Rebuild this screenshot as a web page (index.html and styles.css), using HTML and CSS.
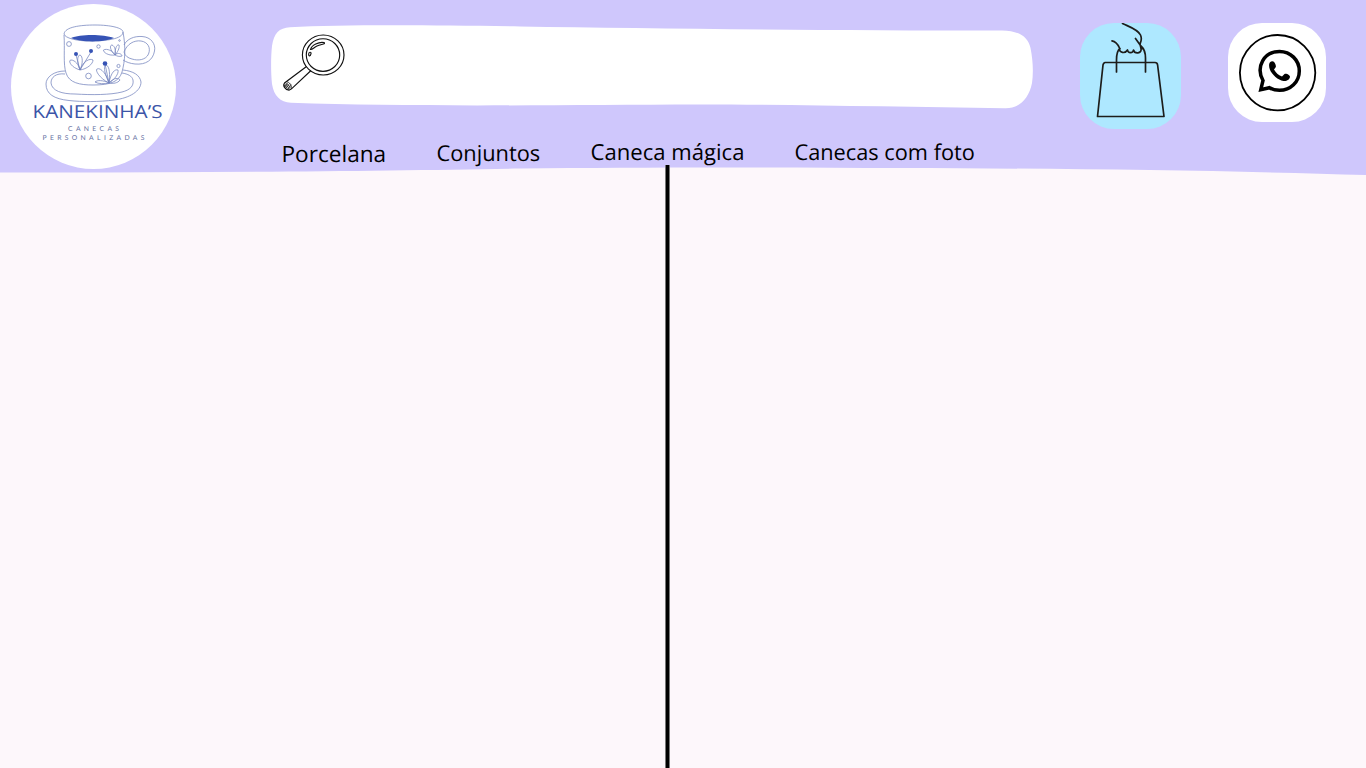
FILE: index.html
```html
<!DOCTYPE html>
<html lang="pt-BR">
<head>
<meta charset="utf-8">
<title>Kanekinha's</title>
<link rel="stylesheet" href="styles.css">
</head>
<body>
<header class="header">
  <svg class="header-shape" viewBox="0 0 1366 176" aria-hidden="true"><path d="M0 0H1366V175C1240 171 1080 168.500 900 168C780 167.200 640 167 520 168.500C380 171 180 173 0 172.500Z"/></svg>
  <a class="logo" href="#" aria-label="Kanekinha's">
    <svg viewBox="11 4 165 165">
      <circle class="logo-disc" cx="93.500" cy="86.500" r="82.500"/>
      <g class="logo-line">
        <path d="M64 34C65 27 80 25 95 25C111 25 123 28 123 32C123 39 106 41 90 41C76 41 65 38 64 34ZM64 35C65 49 63 64 66 73C69 83 80 85 93 85C110 85 119 82 122 72C125 61 126 48 123 32"/>
        <path d="M124 45C127 39 134 36 142 36.500C151 37 156 44 154.500 51C153 60 146 65 135 64C130 63.500 126 62 123 60"/>
        <path d="M124 52C127 44 134 40 141 41C148 42 151 48 148.500 54C146 60 138 61 132 59C128 58 125 56 124 52Z"/>
        <path d="M65 71C54 71 46 77 46 84C46 94 54 99 69 100.500C82 102 99 102 114 100C130 98 141 91 141 82C140 75 133 71 123 70"/>
        <path d="M65 74C56 73 51 77 51 83C52 91 62 94 75 94C92 95 110 95 122 92C130 90 134 86 133 80C132 76 128 74 122 73"/>
        <path d="M80 70C70 67 68 60 71 60C75 60 79 65 80 70C76 60 78 55 80 55C83 56 83 64 80 70C83 61 90 58 93 60C93 64 87 69 80 70M80 70L76 55M80 70L91 52"/>
        <path d="M109 83C99 78 95 70 97 69C101 67 107 75 109 83C103 70 104 65 106 65C110 66 110 76 109 83C111 72 115 69 118 70C119 74 114 80 109 83C114 77 119 78 120 80C118 83 113 84 109 83C103 80 97 80 95 82C98 84 105 84 109 83M109 83L105 64"/>
        <path d="M115 55C108 56 103 52 103.500 50C107 48 113 51 115 55C109 49 110 45 112 45C115 46 116 51 115 55C115 48 117 44 119 45C120 48 117 53 115 55C118 52 122 54 122 56C119 57 117 56 115 55"/>
        <circle cx="69" cy="44" r="2.400"/><circle cx="98.500" cy="46.500" r="1.700"/><circle cx="88.500" cy="76" r="2.800"/><circle cx="118.500" cy="66" r="1.600"/><circle cx="119.500" cy="40.500" r=".8"/>
      </g>
      <g class="logo-fill"><path d="M71 38C80 34 103 34 114 38C104 42.500 81 42.500 71 38Z"/><circle cx="76" cy="54" r="2"/><circle cx="91" cy="51" r="2"/><circle cx="105" cy="63.500" r="2.300"/></g>
      <text class="logo-name" x="32.500" y="117.800" textLength="130" lengthAdjust="spacingAndGlyphs">KANEKINHA’S</text>
      <text class="logo-tag" x="68" y="130.600" textLength="51">CANECAS</text>
      <text class="logo-tag" x="42.500" y="139.800" textLength="102">PERSONALIZADAS</text>
    </svg>
  </a>
  <div class="center">
    <svg class="search" viewBox="271 25 762 84" role="img" aria-label="Buscar">
      <path class="search-field" d="M290 27.300C340 24.500 430 25 520 26.500C650 28.500 820 30.500 1002 30.500C1020 31 1028 37 1030.500 48C1033 60 1033.500 73 1032 83C1029 98 1020 108.500 1005 108.200C900 107 790 104.500 700 104.500C550 105 410 107 291 102.800C280 102 274 96 272 84C270.800 72 270.800 57 272 46C274 33 279 28 290 27.300Z"/>
      <g class="lens">
        <ellipse cx="323.200" cy="55" rx="20.800" ry="20"/><ellipse cx="323" cy="55" rx="16.700" ry="16.300"/>
        <path d="M306.500 66.500L284.500 83C282.500 85.500 285 89.800 289 90.200L291.500 88.800L311 70.500M310.500 49.500C311.500 45 319 41.500 324 42.500C326 44.500 321 44 317 46C314 47.500 312 50 310.500 49.500ZM308.700 54C308.700 52 311.500 51.500 311 53.700C310.500 56.500 308.500 57 308.700 54Z"/>
        <path class="lens-grip" d="M286 81.500C289.500 82 292 85 291.500 88.800M284 85L289 89.500M285.500 83L291 87.500M284.500 87L288 82.500M287.500 90L291 84.500M285.500 88.500L289.500 83.500M284.500 84L290 88.500"/>
      </g>
    </svg>
    <nav class="nav">
      <a class="link link-porcelana" href="#">Porcelana</a>
      <a class="link link-conjuntos" href="#">Conjuntos</a>
      <a class="link link-magica" href="#">Caneca mágica</a>
      <a class="link link-foto" href="#">Canecas com foto</a>
    </nav>
  </div>
  <a class="bag" href="#" aria-label="Sacola">
    <svg viewBox="1080 23 101 106"><path class="bag-line" d="M1105 62.500H1155Q1157.300 62.500 1157.600 65L1164 116.500L1097.500 116.500L1103 65Q1103.300 63 1105 62.500M1116.500 72V60Q1116.500 51 1120 48.500M1145.500 72V58Q1145.500 50 1141 46M1112 40.800C1116 41.500 1118 44.500 1119.500 48C1119 53 1125 54 1127.500 50C1128 53.500 1133 53.500 1133.500 50C1134.500 54 1142 54 1141 48.500L1140 44M1143 49L1135.500 38.500M1122.500 23.500C1130 27 1138 29.500 1140.500 35C1142 38.500 1141.500 41 1140 44"/></svg>
  </a>
  <a class="whatsapp" href="#" aria-label="WhatsApp">
    <svg viewBox="1228 23 98 99"><circle class="wa-ring" cx="1277.600" cy="72.700" r="37.700"/><path class="wa-bubble" d="M1260.800 89.700L1263 80.500C1255.500 67 1264 51.500 1279.500 51.500C1290.500 51.500 1299.300 60 1299.300 71C1299.300 82 1290.500 90.300 1279.500 90.300C1275.500 90.300 1272 89.300 1269.500 87.700Z"/><path d="M1269.200 64C1270 61 1273 60.500 1274.300 62.200C1275.500 64 1276.500 66.500 1275.500 67.500L1274 69.500C1276 73 1278 75 1282 76.500L1284.500 74C1286 72.800 1290 75 1290 76.500C1290 79.500 1286.500 81.500 1283.500 81C1276 79.500 1268 71 1269.200 64Z"/></svg>
  </a>
</header>
<main class="content"><div class="divider"></div></main>
</body>
</html>
```
FILE: styles.css
```css
* { box-sizing: border-box; }
body {
  margin: 0;
  height: 100vh;
  display: flex;
  flex-direction: column;
  overflow: hidden;
  background: #fdf7fb;
  font-family: "Open Sans", "Noto Sans", sans-serif;
  text-rendering: geometricPrecision;
}
svg { display: block; width: 100%; height: 100%; }
.header {
  position: relative;
  z-index: 0;
  display: flex;
  align-items: flex-start;
  height: 165px;
  padding-left: 11px;
}
.header-shape {
  position: absolute;
  z-index: -1;
  top: 0;
  left: 0;
  width: 1366px;
  height: 176px;
  fill: #cfc7fc;
}
.logo { width: 165px; height: 165px; margin-top: 4px; flex: none; }
.logo-disc { fill: #fff; }
.logo-line { fill: none; stroke: #5266ae; stroke-width: .75; opacity: .8; }
.logo-fill { fill: #3653b5; }
.logo-name { font: 18px "Open Sans", sans-serif; fill: #3c55a8; }
.logo-tag { font: 6.8px Lato, sans-serif; fill: #6570a2; }
.center { width: 762px; margin: 25px 0 0 95px; flex: none; }
.search { height: 84px; }
.search-field { fill: #fff; }
.lens { fill: none; stroke: #111; stroke-width: 1.15; }
.lens-grip { stroke-width: .7; }
.nav { display: flex; padding: 27px 0 0 10.5px; white-space: nowrap; }
.link { color: #000; text-decoration: none; line-height: 32px; }
.link-porcelana { width: 155px; padding-top: 2px; font-size: 22.6px; }
.link-conjuntos { width: 154px; padding-top: 2px; font-size: 21.8px; }
.link-magica { width: 204px; font-size: 22.1px; }
.link-foto { padding-top: 1px; font-size: 21.75px; }
.bag {
  width: 101px;
  height: 106px;
  margin: 23px 0 0 47px;
  border-radius: 34px;
  background: #aee8ff;
  flex: none;
}
.bag-line { fill: none; stroke: #1d1d1b; stroke-width: 1.7; stroke-linecap: round; stroke-linejoin: round; }
.whatsapp {
  width: 98px;
  height: 99px;
  margin: 23px 0 0 47px;
  border-radius: 34px;
  background: #fff;
  flex: none;
}
.wa-ring { fill: none; stroke: #000; stroke-width: 1.8; }
.wa-bubble { fill: none; stroke: #000; stroke-width: 3.5; }
.content { position: relative; z-index: 1; flex: 1; display: flex; padding-left: 665px; }
.divider { width: 5px; background: #000; border: solid #777; border-width: 0 1px; }
```
